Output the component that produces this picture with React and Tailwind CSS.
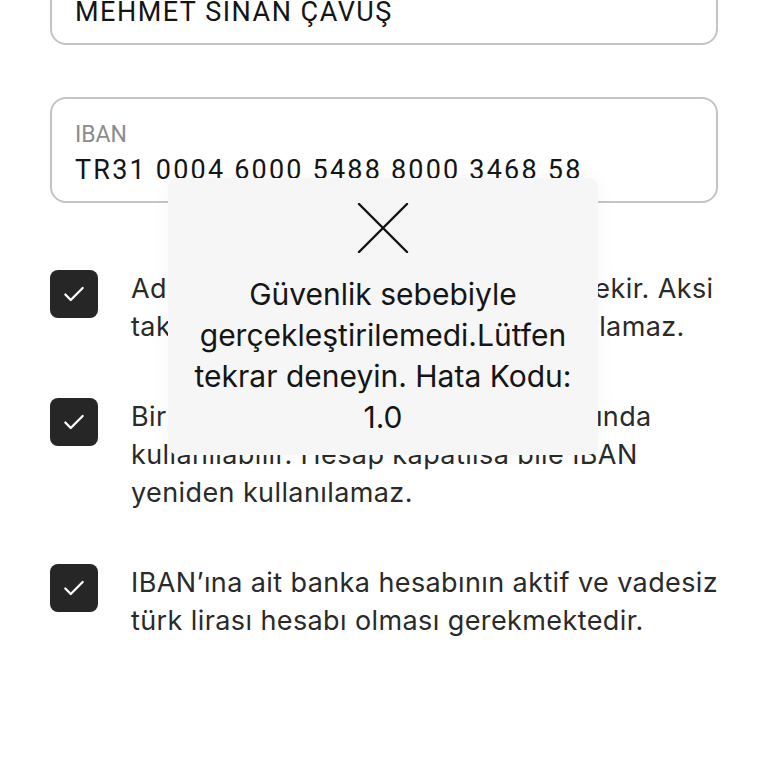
import React from 'react';

function Field({ label, value, tracking, className = '' }) {
  return (
    <div className={`h-[106px] rounded-[16px] border-2 border-[#c4c4c4] px-[23px] pt-[22px] ${className}`}>
      <div className="text-[23px] leading-[28px] text-[#8c8c8c]">{label}</div>
      <div className={`mt-[4px] text-[27px] leading-[34px] text-[#151515] ${tracking}`}>{value}</div>
    </div>
  );
}

function CheckRow({ lines, className = '' }) {
  return (
    <div className={`flex items-start gap-[33px] ${className}`}>
      <div className="flex h-[48px] w-[48px] shrink-0 items-center justify-center rounded-[8px] bg-[#262626]">
        <svg width="26" height="26" viewBox="0 0 24 24" fill="none">
          <path d="M4 12.5l5 5L20 6.5" stroke="white" strokeWidth="2.1" strokeLinecap="round" strokeLinejoin="round" />
        </svg>
      </div>
      <div className="font-['Inter',sans-serif] text-[27px] leading-[38px] tracking-[0.4px] text-[#2a2a2a]">
        {lines.map((l, i) => (
          <div key={i} className="whitespace-nowrap">{l}</div>
        ))}
      </div>
    </div>
  );
}

export default function App() {
  return (
    <div className="relative h-[768px] w-[768px] overflow-hidden bg-white" style={{ fontFamily: 'Roboto, "Liberation Sans", sans-serif' }}>
      <div className="px-[50px]">
        <Field label="Ad Soyad" value="MEHMET SINAN ÇAVUŞ" tracking="tracking-[1.5px]" className="-mt-[61px]" />
        <Field label="IBAN" value="TR31 0004 6000 5488 8000 3468 58" tracking="tracking-[2.2px]" className="mt-[52px]" />

        <CheckRow
          className="mt-[67px]"
          lines={['Ad soyadın IBAN ile aynı olması gerekir. Aksi', 'takdirde bankanız işlemlerinizi onaylamaz.']}
        />
        <CheckRow
          className="mt-[52px]"
          lines={['Bir IBAN yalnızca bir hesap kapsamında', 'kullanılabilir. Hesap kapatılsa bile IBAN', 'yeniden kullanılamaz.']}
        />
        <CheckRow
          className="mt-[52px]"
          lines={['IBAN’ına ait banka hesabının aktif ve vadesiz', 'türk lirası hesabı olması gerekmektedir.']}
        />
      </div>

      {/* Error toast */}
      <div className="absolute left-[168px] top-[178px] flex h-[277px] w-[430px] flex-col items-center rounded-[10px] bg-[#f6f6f6] pt-[25px] shadow-[0_0_20px_rgba(0,0,0,0.04)]">
        <svg width="52" height="50" viewBox="0 0 52 50" fill="none">
          <path d="M2 1L50 49M50 1L2 49" stroke="#111" strokeWidth="2.4" strokeLinecap="round" />
        </svg>
        <div className="mt-[21px] text-center font-['Inter',sans-serif] text-[30px] leading-[41px] text-[#151515]">
          <div>Güvenlik sebebiyle</div>
          <div>gerçekleştirilemedi.Lütfen</div>
          <div>tekrar deneyin. Hata Kodu:</div>
          <div>1.0</div>
        </div>
      </div>
    </div>
  );
}
